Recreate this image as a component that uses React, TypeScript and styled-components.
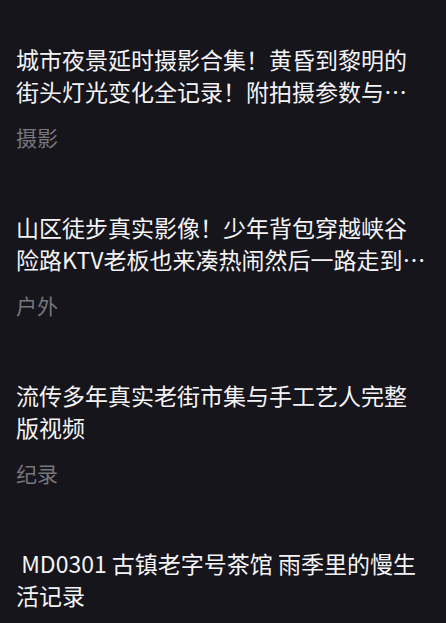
import React from "react";
import styled, { createGlobalStyle } from "styled-components";

const Global = createGlobalStyle`
  html, body { margin: 0; padding: 0; background: #16151b; }
  body { font-family: "Noto Sans CJK SC", "Noto Sans", sans-serif; }
`;

const List = styled.div`
  display: flex;
  flex-direction: column;
  gap: 61px;
  padding: 44px 20px 0 16px;
  min-height: 623px;
  box-sizing: border-box;
  background: #16151b;
`;

const Item = styled.div`
  display: flex;
  flex-direction: column;
  gap: 16px;
`;

const Title = styled.div`
  color: #f4f4f6;
  font-size: 23px;
  line-height: 31.5px;
  display: -webkit-box;
  -webkit-line-clamp: 2;
  -webkit-box-orient: vertical;
  overflow: hidden;
  white-space: pre-wrap;
`;

const Tag = styled.div`
  color: #77767c;
  font-size: 21px;
  line-height: 28px;
`;

const items = [
  { title: "城市夜景延时摄影合集！黄昏到黎明的街头灯光变化全记录！附拍摄参数与后期技巧分享", tag: "摄影" },
  { title: "山区徒步真实影像！少年背包穿越峡谷险路KTV老板也来凑热闹然后一路走到终点完整纪录", tag: "户外" },
  { title: "流传多年真实老街市集与手工艺人完整版视频", tag: "纪录" },
  { title: " MD0301 古镇老字号茶馆 雨季里的慢生活记录", tag: "生活" },
];

export default function App() {
  return (
    <>
      <Global />
      <List>
        {items.map((it, i) => (
          <Item key={i}>
            <Title>{it.title}</Title>
            <Tag>{it.tag}</Tag>
          </Item>
        ))}
      </List>
    </>
  );
}
